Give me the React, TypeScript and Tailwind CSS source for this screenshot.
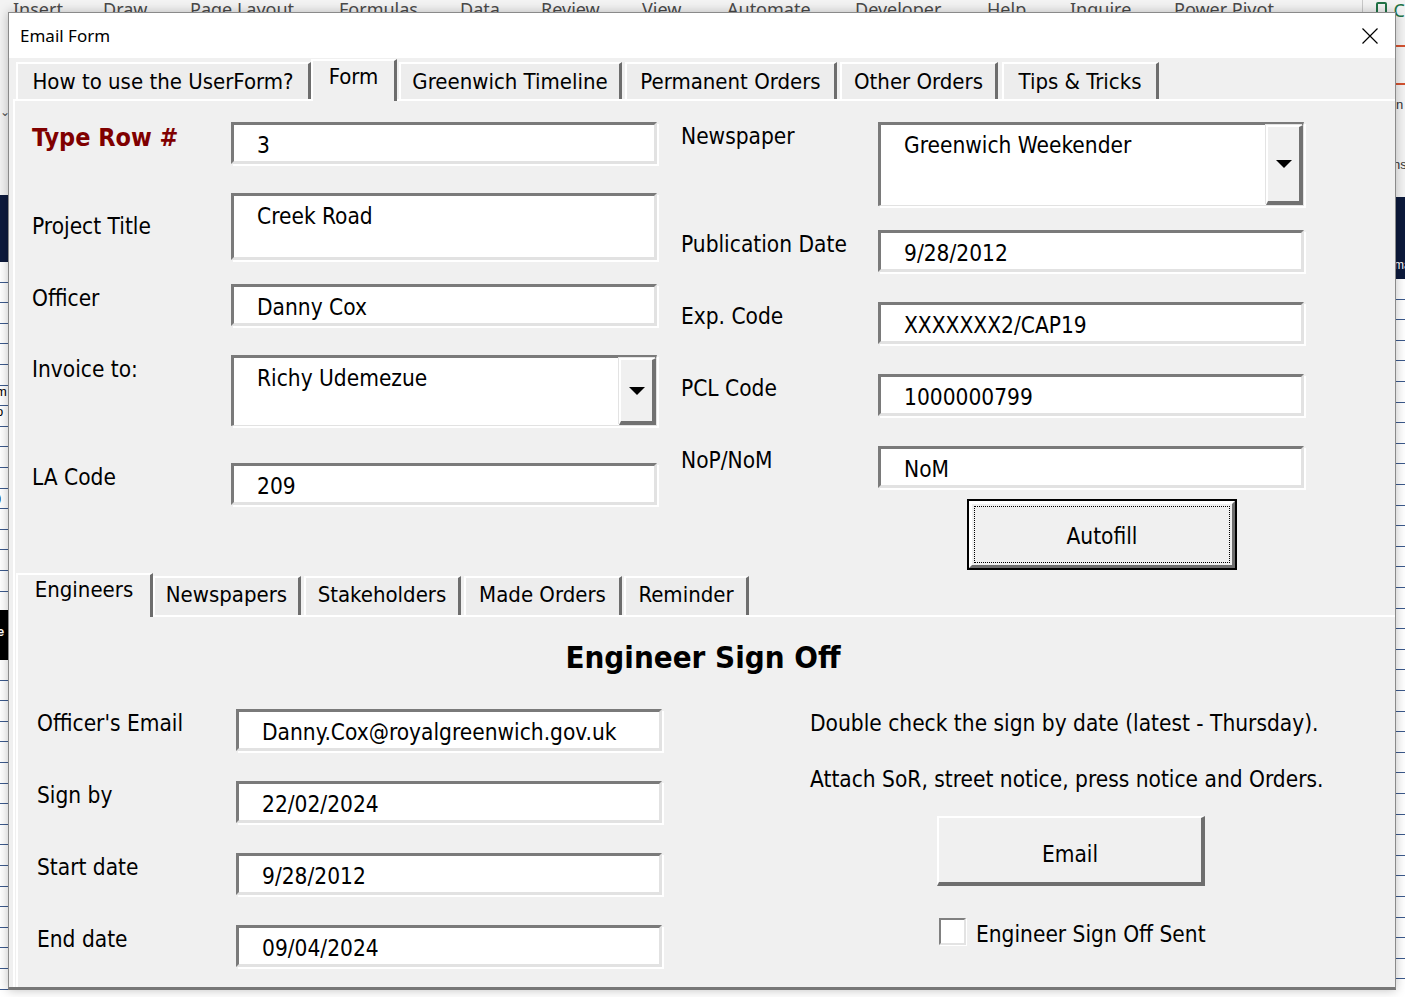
import React from "react";

const ui = "font-['DejaVu_Sans_Condensed','DejaVu_Sans',sans-serif] [font-stretch:condensed]";

const ribbon: [string, string][] = [
  ["Insert", "w-[90px]"],
  ["Draw", "w-[87px]"],
  ["Page Layout", "w-[149px]"],
  ["Formulas", "w-[121px]"],
  ["Data", "w-[81px]"],
  ["Review", "w-[101px]"],
  ["View", "w-[85px]"],
  ["Automate", "w-[128px]"],
  ["Developer", "w-[132px]"],
  ["Help", "w-[83px]"],
  ["Inquire", "w-[104px]"],
  ["Power Pivot", "w-[188px]"],
];

const outerTabs = [
  { label: "How to use the UserForm?", w: "w-[295px]" },
  { label: "Form", w: "w-[86px]", active: true },
  { label: "Greenwich Timeline", w: "w-[223px]", gap: "ml-[2px]" },
  { label: "Permanent Orders", w: "w-[212px]", gap: "ml-[3px]" },
  { label: "Other Orders", w: "w-[158px]", gap: "ml-[3px]" },
  { label: "Tips & Tricks", w: "w-[157px]", gap: "ml-[4px]" },
];

const innerTabs = [
  { label: "Engineers", w: "w-[137px]", active: true },
  { label: "Newspapers", w: "w-[148px]" },
  { label: "Stakeholders", w: "w-[157px]", gap: "ml-[3px]" },
  { label: "Made Orders", w: "w-[158px]", gap: "ml-[3px]" },
  { label: "Reminder", w: "w-[125px]", gap: "ml-[2px]" },
];

// sunken VBA textbox
function Field({ value, h }: { value: string; h: string }) {
  return (
    <div
      className={`${h} w-[426px] shrink-0 bg-white border-[3px] border-t-[#7a7a7a] border-l-[#7a7a7a] border-r-[#e2e2e2] border-b-[#e2e2e2] shadow-[2px_2px_0_0_#ffffff] pl-[23px] pt-[6px] text-[22.5px] leading-[28px] text-black whitespace-nowrap`}
    >
      {value}
    </div>
  );
}

function Combo({ value, h }: { value: string; h: string }) {
  return (
    <div
      className={`${h} w-[426px] shrink-0 flex bg-white border-t-[3px] border-l-[3px] border-r border-b border-t-[#7a7a7a] border-l-[#7a7a7a] border-r-[#e2e2e2] border-b-[#e2e2e2] shadow-[2px_2px_0_0_#ffffff]`}
    >
      <div className="flex-1 pl-[23px] pt-[6px] text-[22.5px] leading-[28px] whitespace-nowrap">{value}</div>
      <div className="w-[37px] flex items-center justify-center bg-[#f0f0f0] border-t-2 border-l-2 border-t-white border-l-white border-r-[4px] border-b-[4px] border-r-[#727272] border-b-[#727272] shadow-[-1px_-1px_0_0_#e3e3e3]">
        <svg width="16" height="8" viewBox="0 0 16 8">
          <path d="M0 0H16L8 8Z" fill="#000" />
        </svg>
      </div>
    </div>
  );
}

function Row({
  label,
  labelW,
  labelClass = "",
  className = "",
  children,
}: {
  label: string;
  labelW: string;
  labelClass?: string;
  className?: string;
  children: React.ReactNode;
}) {
  return (
    <div className={`flex items-start ${className}`}>
      <div className={`${labelW} shrink-0 leading-[28px] whitespace-nowrap ${labelClass || "text-[22.5px]"}`}>{label}</div>
      {children}
    </div>
  );
}

function Tab({ label, w, active, gap = "", inner }: { label: string; w: string; active?: boolean; gap?: string; inner?: boolean }) {
  const shape = active
    ? inner
      ? "h-[44px] pt-[1px] relative z-10 bg-[#f0f0f0]"
      : "mt-[1px] h-[42px] pt-[2px] relative z-10 bg-[#f0f0f0]"
    : inner
    ? "mt-[3px] h-[39px] pt-[3px] bg-[#ededed]"
    : "mt-[4px] h-[37px] pt-[4px] bg-[#ededed]";
  return (
    <div
      className={`${w} ${gap} ${shape} shrink-0 flex justify-center border-t-2 border-l-2 border-t-white border-l-white border-r-[3px] border-r-[#6d6d6d] text-[22px] leading-[28px] whitespace-nowrap`}
    >
      {label}
    </div>
  );
}

function Backdrop() {
  return (
    <div className="flex flex-col w-[1405px] h-[997px]">
      <div className="h-[40px] shrink-0 flex bg-[#f3f3f3] pl-[13px] font-['Noto_Sans',sans-serif] text-[18px] leading-[24px] text-[#4a4a4a]">
        {ribbon.map(([t, w]) => (
          <span key={t} className={`${w} shrink-0 -mt-[3px] whitespace-nowrap`}>
            {t}
          </span>
        ))}
        <div className="w-px h-[14px] bg-[#c8c8c8]" />
        <div className="ml-[13px] mt-[2px] w-[15px] h-[15px] border-2 border-[#217346] rounded-[2px]" />
        <span className="ml-[7px] -mt-[2px] text-[#217346] text-[18px]">C</span>
      </div>
      <div className="flex-1 flex">
        {/* left sliver of the sheet */}
        <div className="w-[8px] flex flex-col text-[13px] leading-[20px] font-['Liberation_Sans',sans-serif] overflow-hidden">
          <div className="h-[155px] bg-[#f3f3f3] pt-[62px] text-[#555] text-[12px]">⌄</div>
          <div className="h-[67px] bg-[#0d1a3c]" />
          <div className="h-[348px] bg-white bg-[repeating-linear-gradient(to_bottom,transparent_0px,transparent_19.6px,#3c5a8c_19.6px,#3c5a8c_20.6px)] pt-[120px] whitespace-nowrap">
            <div className="-ml-[4px]">m</div>
            <div className="-ml-[4px]">o</div>
            <div className="-ml-[3px] mt-[66px]">)</div>
          </div>
          <div className="h-[50px] bg-black text-white font-bold pt-[12px] -indent-[3px]">e</div>
          <div className="flex-1 bg-white bg-[repeating-linear-gradient(to_bottom,transparent_0px,transparent_19.6px,#3c5a8c_19.6px,#3c5a8c_20.6px)]" />
        </div>
        <div className="flex-1 bg-white" />
        {/* right sliver */}
        <div className="w-[9px] flex flex-col text-[13px] leading-[20px] font-['Liberation_Sans',sans-serif] overflow-hidden">
          <div className="h-[157px] bg-[#f3f3f3] pt-[5px]">
            <div className="w-[14px] h-[40px] border-2 border-[#d35230] -ml-[2px]" />
            <div className="mt-[10px] -ml-[3px] text-[#333] whitespace-nowrap">in</div>
            <div className="mt-[40px] -ml-[3px] text-[#333] whitespace-nowrap">ns</div>
          </div>
          <div className="h-[82px] bg-[#0d1a3c] pt-[58px] text-white text-[12px] whitespace-nowrap">
            <span className="-ml-[2px]">ma</span>
          </div>
          <div className="flex-1 bg-white bg-[repeating-linear-gradient(to_bottom,transparent_0px,transparent_19.6px,#3c5a8c_19.6px,#3c5a8c_20.6px)]" />
        </div>
      </div>
    </div>
  );
}

export default function App() {
  return (
    <div className="relative w-[1405px] h-[997px] overflow-hidden bg-white">
      <Backdrop />

      {/* the UserForm window */}
      <div
        className={`absolute left-[8px] top-[12px] w-[1388px] h-[978px] flex flex-col border border-[#8a8a8a] border-b-[3px] border-b-[#777] shadow-[0_0_10px_rgba(0,0,0,0.25)] bg-[#f0f0f0] text-black ${ui}`}
      >
        <div className="h-[45px] shrink-0 bg-white flex items-center justify-between pl-[11px] pr-[17px]">
          <span className="font-['Noto_Sans',sans-serif] [font-stretch:normal] text-[17px] leading-[22px]">Email Form</span>
          <svg width="16" height="16" viewBox="0 0 16 16">
            <path d="M0.5 0.5L15.5 15.5M15.5 0.5L0.5 15.5" stroke="#000" strokeWidth="1.2" />
          </svg>
        </div>

        <div className="flex-1 flex flex-col pl-[4px]">
          {/* outer tab strip */}
          <div className="h-[41px] shrink-0 flex items-start pl-[3px]">
            {outerTabs.map((t) => (
              <Tab key={t.label} {...t} />
            ))}
          </div>

          {/* Form page */}
          <div className="flex-1 flex flex-col border-t-2 border-l-2 border-white">
            <div className="h-[472px] shrink-0 flex pl-[17px] pt-[21px]">
              <div className="w-[627px] flex flex-col">
                <Row label="Type Row #" labelW="w-[199px]" labelClass="text-[25px] font-bold text-[#800000] mt-[2px]">
                  <Field value="3" h="h-[42px]" />
                </Row>
                <Row label="Project Title" labelW="w-[199px]" labelClass="text-[22.5px] mt-[19px]" className="mt-[29px]">
                  <Field value="Creek Road" h="h-[67px]" />
                </Row>
                <Row label="Officer" labelW="w-[199px]" className="mt-[24px]">
                  <Field value="Danny Cox" h="h-[42px]" />
                </Row>
                <Row label="Invoice to:" labelW="w-[199px]" className="mt-[29px]">
                  <Combo value="Richy Udemezue" h="h-[71px]" />
                </Row>
                <Row label="LA Code" labelW="w-[199px]" className="mt-[37px]">
                  <Field value="209" h="h-[42px]" />
                </Row>
              </div>

              <div className="ml-[22px] flex flex-col">
                <Row label="Newspaper" labelW="w-[197px]">
                  <Combo value="Greenwich Weekender" h="h-[84px]" />
                </Row>
                <Row label="Publication Date" labelW="w-[197px]" className="mt-[24px]">
                  <Field value="9/28/2012" h="h-[42px]" />
                </Row>
                <Row label="Exp. Code" labelW="w-[197px]" className="mt-[30px]">
                  <Field value="XXXXXXX2/CAP19" h="h-[42px]" />
                </Row>
                <Row label="PCL Code" labelW="w-[197px]" className="mt-[30px]">
                  <Field value="1000000799" h="h-[42px]" />
                </Row>
                <Row label="NoP/NoM" labelW="w-[197px]" className="mt-[30px]">
                  <Field value="NoM" h="h-[42px]" />
                </Row>
                <div className="ml-[286px] mt-[11px] w-[270px] h-[71px] border-2 border-black">
                  <div className="h-full border-[3px] border-t-white border-l-white border-r-[#6e6e6e] border-b-[#6e6e6e] bg-[#f0f0f0] p-[2px]">
                    <div className="h-full border border-dotted border-black flex items-center justify-center pt-[3px] text-[22.5px] leading-[28px]">
                      Autofill
                    </div>
                  </div>
                </div>
              </div>
            </div>

            {/* inner multipage */}
            <div className="h-[42px] shrink-0 flex items-start pl-[1px]">
              {innerTabs.map((t) => (
                <Tab key={t.label} {...t} inner />
              ))}
            </div>
            <div className="flex-1 flex flex-col border-t-2 border-l-2 border-white ml-[1px]">
              <div className="mt-[22px] pr-[7px] text-center text-[31px] leading-[36px] font-bold">Engineer Sign Off</div>

              <div className="mt-[34px] flex pl-[19px]">
                <div className="flex flex-col">
                  <Row label="Officer's Email" labelW="w-[199px]">
                    <Field value="Danny.Cox@royalgreenwich.gov.uk" h="h-[42px]" />
                  </Row>
                  <Row label="Sign by" labelW="w-[199px]" className="mt-[30px]">
                    <Field value="22/02/2024" h="h-[42px]" />
                  </Row>
                  <Row label="Start date" labelW="w-[199px]" className="mt-[30px]">
                    <Field value="9/28/2012" h="h-[42px]" />
                  </Row>
                  <Row label="End date" labelW="w-[199px]" className="mt-[30px]">
                    <Field value="09/04/2024" h="h-[42px]" />
                  </Row>
                </div>

                <div className="ml-[148px] flex flex-col text-[22.5px] leading-[28px]">
                  <div className="whitespace-nowrap">Double check the sign by date (latest - Thursday).</div>
                  <div className="mt-[28px] whitespace-nowrap">Attach SoR, street notice, press notice and Orders.</div>
                  <div className="ml-[127px] mt-[23px] w-[268px] h-[70px] flex items-center justify-center pt-[8px] bg-[#f0f0f0] border-t-2 border-l-2 border-t-white border-l-white border-r-[4px] border-b-[4px] border-r-[#6e6e6e] border-b-[#6e6e6e]">
                    Email
                  </div>
                  <div className="ml-[129px] mt-[32px] flex items-start">
                    <div className="w-[27px] h-[27px] bg-white border-2 border-t-[#808080] border-l-[#808080] border-r-[#e3e3e3] border-b-[#e3e3e3] shadow-[1px_1px_0_0_#ffffff]" />
                    <span className="ml-[10px] pt-[2px] whitespace-nowrap">Engineer Sign Off Sent</span>
                  </div>
                </div>
              </div>
            </div>
          </div>
        </div>
      </div>
    </div>
  );
}
